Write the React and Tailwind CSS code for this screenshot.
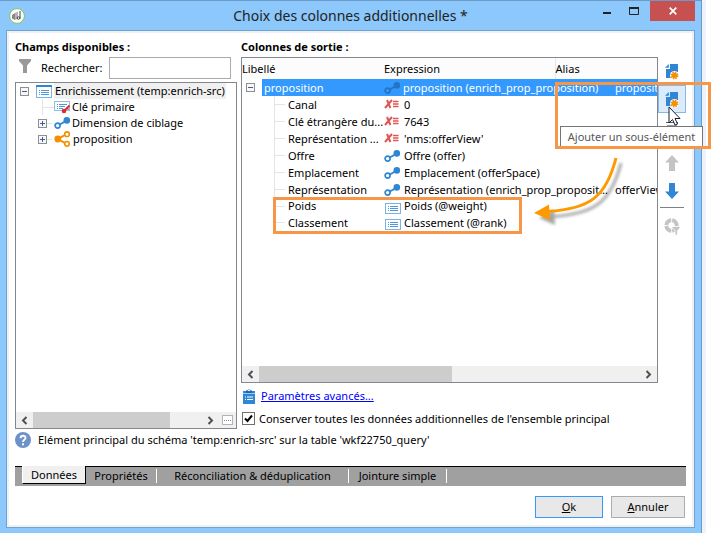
import React from "react";

function LinkIcon({ dim }) {
  const c = dim ? "#2474c4" : "#2e86d4";
  return (
    <svg width="17" height="14" viewBox="0 0 17 14" className="shrink-0" aria-hidden="true">
      <path d="M4 9.5 L12 5" stroke={c} strokeWidth="2" />
      <circle cx="3.6" cy="9.6" r="2.5" fill={dim ? "#3399ff" : "#fff"} stroke={c} strokeWidth="1.7" />
      <circle cx="12.8" cy="4.4" r="3.3" fill={c} />
    </svg>
  );
}

function ShareIcon() {
  return (
    <svg width="17" height="16" viewBox="0 0 17 16" className="shrink-0" aria-hidden="true">
      <path d="M12.5 3.2 L4 8 L12.5 12.8" fill="none" stroke="#f29100" strokeWidth="2" />
      <circle cx="3.8" cy="8" r="3.4" fill="#f29100" />
      <circle cx="13" cy="3.2" r="2.3" fill="#fff" stroke="#f29100" strokeWidth="1.6" />
      <circle cx="13" cy="12.8" r="2.3" fill="#fff" stroke="#f29100" strokeWidth="1.6" />
    </svg>
  );
}

function SchemaIcon() {
  return (
    <svg width="16" height="13" viewBox="0 0 16 13" className="shrink-0" aria-hidden="true">
      <rect x="0.5" y="0.5" width="15" height="12" fill="#fff" stroke="#7ab3e4" />
      <rect x="0" y="0" width="16" height="2" fill="#2e86d4" />
      <path d="M3 5.5h1M3 7.5h1M3 9.5h1M5 5.5h8M5 7.5h8M5 9.5h8" stroke="#4d98dc" strokeWidth="1" />
    </svg>
  );
}

function FieldIcon() {
  return (
    <svg width="16" height="11" viewBox="0 0 16 11" className="shrink-0" aria-hidden="true">
      <rect x="0.5" y="0.5" width="15" height="10" fill="#fff" stroke="#7ab3e4" />
      <path d="M3 3.5h1M3 5.5h1M3 7.5h1M5 3.5h8M5 5.5h8M5 7.5h8" stroke="#4d98dc" strokeWidth="1" />
    </svg>
  );
}

function KeyIcon() {
  return (
    <svg width="17" height="14" viewBox="0 0 17 14" className="shrink-0" aria-hidden="true">
      <rect x="0.5" y="1.5" width="15" height="9" fill="#fff" stroke="#8fbfe8" />
      <path d="M3 4.5h1M3 6.5h1M3 8.5h1M5 4.5h8M5 6.5h6M5 8.5h4" stroke="#4d98dc" strokeWidth="1" />
      <path d="M15.5 5.5 L10.5 10.5" stroke="#e02a2a" strokeWidth="1.8" />
      <circle cx="10" cy="11" r="2.3" fill="#e02a2a" />
      <path d="M13 8l1.6 1.6" stroke="#e02a2a" strokeWidth="1.3" />
    </svg>
  );
}

function ValueIcon() {
  return (
    <svg width="17" height="11" viewBox="0 0 17 11" className="shrink-0" aria-hidden="true">
      <path d="M3 1 L6.4 9 M8 1 L1 9" stroke="#e35454" strokeWidth="2" />
      <path d="M9 2.5h5.500M9 5h5.500M9 7.500h5.500" stroke="#e35454" strokeWidth="1.400" />
    </svg>
  );
}

function Expander({ open }) {
  return (
    <svg width="9" height="9" viewBox="0 0 9 9" className="shrink-0" aria-hidden="true">
      <rect x="0.5" y="0.5" width="8" height="8" fill="#f7f7f7" stroke="#8f8f8f" />
      <path d={open ? "M2 4.5h5" : "M2 4.5h5M4.5 2v5"} stroke="#3a5fa8" />
    </svg>
  );
}

function NewItemIcon() {
  return (
    <svg width="14" height="17" viewBox="0 0 14 17" aria-hidden="true">
      <path d="M5 1H13V9H9L6 12V15H1V6H5Z" fill="#2e86d4" />
      <path d="M3.800 1V4.800H0Z" fill="#2e86d4" />
      <circle cx="9.500" cy="12.500" r="4.500" fill="#fff" />
      <circle cx="9.500" cy="12.500" r="2.800" fill="#f29100" />
      <circle cx="9.500" cy="12.500" r="3.300" fill="none" stroke="#f29100" strokeWidth="1.400" strokeDasharray="1.500 1.092" />
    </svg>
  );
}

function Arrow({ up }) {
  return (
    <svg width="14" height="17" viewBox="0 0 14 17" aria-hidden="true">
      {up ? (
        <path d="M7 0L14 7.5H10V16H4V7.5H0Z" fill="#c4c4c4" />
      ) : (
        <path d="M7 16L14 8.5H10V0H4V8.5H0Z" fill="#2e86d4" />
      )}
    </svg>
  );
}

function Chevron({ right }) {
  return (
    <svg width="7" height="9" viewBox="0 0 7 9" aria-hidden="true">
      <path d={right ? "M1.5 1L5 4.5L1.5 8" : "M5.5 1L2 4.5L5.5 8"} fill="none" stroke="#505050" strokeWidth="2" />
    </svg>
  );
}

const icons = { value: ValueIcon, link: LinkIcon, field: FieldIcon };

const rows = [
  { label: "Canal", icon: "value", expr: "0" },
  { label: "Clé étrangère du...", icon: "value", expr: "7643" },
  { label: "Représentation ...", icon: "value", expr: "'nms:offerView'" },
  { label: "Offre", icon: "link", expr: "Offre (offer)" },
  { label: "Emplacement", icon: "link", expr: "Emplacement (offerSpace)" },
  { label: "Représentation", icon: "link", expr: "Représentation (enrich_prop_proposit...", alias: "offerView" },
  { label: "Poids", icon: "field", expr: "Poids (@weight)", short: true },
  { label: "Classement", icon: "field", expr: "Classement (@rank)" },
];

function TitleBar() {
  return (
    <header className="relative flex h-[29px] items-center justify-between pl-[9px]">
      <svg width="16" height="16" viewBox="0 0 16 16" aria-hidden="true">
        <circle cx="8" cy="8" r="7.4" fill="#fff" stroke="#8cc152" />
        <path d="M3 7l3-2v7l-3-1.500z" fill="#888" />
        <path d="M6 5l3-1.500v7l-3 1.500z" fill="#b5b5b5" />
        <path d="M11 3v7.500M8 9.500q1.500-1.500 3 0v1q-1.500 1.500-3 0z" fill="none" stroke="#444" />
      </svg>
      <h1 className="absolute inset-x-0 text-center text-[14px] leading-5 text-[#222]">
        Choix des colonnes additionnelles *
      </h1>
      <div className="relative mr-[6px] flex self-start">
        <button aria-label="Réduire" className="flex h-[20px] w-[22px] items-center justify-center">
          <svg width="8" height="8" viewBox="0 0 8 8"><path d="M0 6h8" stroke="#222" strokeWidth="2" /></svg>
        </button>
        <button aria-label="Agrandir" className="flex h-[20px] w-[32px] items-center justify-center">
          <svg width="10" height="8" viewBox="0 0 10 8"><path d="M.5 1v6.500h9V1" fill="none" stroke="#222" /><path d="M0 1h10" stroke="#222" strokeWidth="2" /></svg>
        </button>
        <button aria-label="Fermer" className="flex h-[20px] w-[45px] items-center justify-center bg-[#c75050]">
          <svg width="8" height="8" viewBox="0 0 8 8"><path d="M.7 .7l6.600 6.600M7.300 .7l-6.600 6.600" stroke="#fff" strokeWidth="1.700" /></svg>
        </button>
      </div>
    </header>
  );
}

function FieldsPanel() {
  return (
    <section className="flex w-[222px] shrink-0 flex-col">
      <h2 className="h-[20px] leading-5 font-bold">Champs disponibles :</h2>
      <div className="mb-[3px] flex h-[22px] items-center pr-[6px] pl-[4px]">
        <svg width="12" height="14" viewBox="0 0 12 14" className="mb-1 shrink-0" aria-hidden="true">
          <path d="M0 0H12V2L8 6.500V14H4V6.500L0 2Z" fill="#999" />
        </svg>
        <label htmlFor="search" className="ml-[10px] w-[68px]">Rechercher:</label>
        <input id="search" className="h-[22px] min-w-0 flex-1 border border-[#ababab] bg-white px-1 outline-none" />
      </div>
      <div className="flex flex-1 flex-col border border-[#828790]">
        <ul className="flex-1 pl-[4px] leading-4 whitespace-nowrap">
          <li>
            <div className="flex h-4 items-center">
              <Expander open />
              <span className="ml-[7px]"><SchemaIcon /></span>
              <span className="ml-[2px] bg-[#f0f0f0] px-px">Enrichissement (temp:enrich-src)</span>
            </div>
            <ul>
              <li className="flex h-4 items-center">
                <span className="ml-[22px] h-4 w-[12px] border-l border-[#e4e4e4]">
                  <span className="mt-2 block border-t border-[#e4e4e4]" />
                </span>
                <KeyIcon />
                <span className="ml-[1px]">Clé primaire</span>
              </li>
              <li className="flex h-4 items-center pl-[18px]">
                <Expander />
                <span className="mr-[2px] w-[5px] border-t border-[#e4e4e4]" />
                <LinkIcon />
                <span className="ml-[1px]">Dimension de ciblage</span>
              </li>
              <li className="flex h-4 items-center pl-[18px]">
                <Expander />
                <span className="mr-[2px] w-[5px] border-t border-[#e4e4e4]" />
                <ShareIcon />
                <span className="ml-[2px]">proposition</span>
              </li>
            </ul>
          </li>
        </ul>
        <div className="flex h-[16px] items-stretch bg-[#f0f0f0]">
          <span className="flex w-[17px] items-center justify-center"><Chevron /></span>
          <span className="w-[137px] bg-[#cdcdcd]" />
          <span className="flex flex-1 items-center justify-end"><Chevron right /></span>
          <button aria-label="Plus" className="mr-[3px] ml-[8px] flex h-[10px] w-[11px] items-center justify-center self-center border border-[#b4b4b4] bg-white">
            <svg width="7" height="1" viewBox="0 0 7 1"><path d="M0 .5h7" stroke="#888" strokeDasharray="1 1" /></svg>
          </button>
        </div>
      </div>
    </section>
  );
}

function ColumnsPanel() {
  return (
    <section className="flex min-w-0 flex-1 flex-col">
      <h2 className="h-[20px] leading-5 font-bold">Colonnes de sortie :</h2>
      <div className="flex min-h-[326px] flex-1 flex-col overflow-hidden border border-[#828790]">
        <table className="w-full table-fixed border-collapse text-left whitespace-nowrap">
          <colgroup>
            <col className="w-[142px]" />
            <col className="w-[171px]" />
            <col className="w-[58px]" />
            <col />
          </colgroup>
          <thead>
            <tr className="h-[21px] bg-[#fcfcfc]">
              <th className="p-0 font-normal">Libellé</th>
              <th className="p-0 font-normal">Expression</th>
              <th colSpan="2" className="border-l border-[#e3e8f0] p-0 font-normal">Alias</th>
            </tr>
          </thead>
          <tbody className="leading-[17px]">
            <tr className="h-[17px] text-white">
              <td className="p-0">
                <div className="flex h-[17px] items-center">
                  <span className="w-[20px] shrink-0 pl-[4px]"><Expander open /></span>
                  <span className="flex-1 bg-[#3399ff] pl-[2px]">proposition</span>
                </div>
              </td>
              <td colSpan="2" className="bg-[#3399ff] p-0">
                <div className="flex h-[17px] items-center gap-[2px]"><LinkIcon dim />proposition (enrich_prop_proposition)</div>
              </td>
              <td className="overflow-hidden bg-[#3399ff] p-0 pl-[2px]">proposition</td>
            </tr>
            {rows.map((r) => {
              const Icon = icons[r.icon];
              const h = r.short ? "h-[16px] leading-4" : "h-[17px]";
              return (
                <tr key={r.label} className={h}>
                  <td className="p-0">
                    <div className={"ml-[32px] flex items-center border-l border-[#e4e4e4] " + h}>
                      <span className="mr-[3px] w-[10px] shrink-0 border-t border-[#e4e4e4]" />
                      {r.label}
                    </div>
                  </td>
                  <td colSpan="2" className="p-0">
                    <div className={"flex items-center " + h}>
                      <span className={r.icon === "field" ? "w-[20px] shrink-0 pt-1 pl-[1px]" : "w-[20px] shrink-0"}><Icon /></span>
                      {r.expr}
                    </div>
                  </td>
                  <td className="overflow-hidden p-0 pl-[2px]">{r.alias}</td>
                </tr>
              );
            })}
          </tbody>
        </table>
        <div className="flex-1" />
        <div className="flex h-[16px] bg-[#f0f0f0]">
          <span className="flex w-[17px] items-center justify-center"><Chevron /></span>
          <span className="w-[193px] bg-[#cdcdcd]" />
          <span className="flex flex-1 items-center justify-end pr-[5px]"><Chevron right /></span>
        </div>
      </div>
      <div className="flex h-[25px] items-center pl-[2px]">
        <svg width="12" height="16" viewBox="0 0 12 16" aria-hidden="true">
          <path d="M0 3H12V16H0Z" fill="#2e86d4" />
          <path d="M0 5.500h12" stroke="#9cc9f0" />
          <path d="M3 2.500h1.500a1.500 1.500 0 0 1 3 0H9V5H3Z" fill="#1d66ab" />
          <path d="M2 9h1M2 11.500h1M4 9h6M4 11.500h6" stroke="#fff" />
          <circle cx="6" cy="2.200" r="1" fill="#fff" />
        </svg>
        <a href="#avances" className="ml-[6px] text-[#0000ff] underline">Paramètres avancés...</a>
      </div>
      <label className="flex h-[21px] items-center gap-[4px] pl-px whitespace-nowrap">
        <span className="grid">
          <input type="checkbox" defaultChecked className="peer col-start-1 row-start-1 size-[13px] appearance-none border border-[#707070] bg-white" />
          <svg width="13" height="13" viewBox="0 0 13 13" className="pointer-events-none col-start-1 row-start-1 hidden peer-checked:block" aria-hidden="true">
            <path d="M3 6.500L5.500 9L10 3.500" fill="none" stroke="#000" strokeWidth="2" />
          </svg>
        </span>
        Conserver toutes les données additionnelles de l'ensemble principal
      </label>
    </section>
  );
}

function Toolbar() {
  return (
    <div className="flex w-[28px] shrink-0 flex-col items-center pt-[20px]">
      <button aria-label="Ajouter" className="flex h-[28px] w-[28px] items-center justify-center"><NewItemIcon /></button>
      <button aria-label="Ajouter un sous-élément" className="flex h-[28px] w-[28px] items-center justify-center border border-[#84b9ec] bg-[#dcebfb]"><NewItemIcon /></button>
      <button aria-label="Supprimer" className="flex h-[36px] w-[28px] justify-center pt-[8px]">
        <svg width="12" height="16" viewBox="0 0 12 16"><path d="M0 1.500h12" stroke="#555" /><path d="M1 4h10v11H1z" fill="#999" /></svg>
      </button>
      <button aria-label="Monter" className="flex h-[28px] w-[28px] items-center justify-center"><Arrow up /></button>
      <button aria-label="Descendre" className="flex h-[28px] w-[28px] items-center justify-center"><Arrow /></button>
      <div className="my-[2px] w-[24px] border-t border-[#808080]" />
      <button aria-label="Analyser" className="mt-[4px] flex h-[24px] w-[28px] items-center justify-center">
        <svg width="16" height="17" viewBox="0 0 16 17">
          <circle cx="7.500" cy="7.500" r="5.200" fill="none" stroke="#c4c4c4" strokeWidth="4" strokeDasharray="7.200 1" />
          <path d="M8 8.500H16V10L13.500 12.500V17H11V12.500L8 9.500Z" fill="#c4c4c4" stroke="#fff" strokeWidth=".8" />
        </svg>
      </button>
    </div>
  );
}

function Tabs() {
  return (
    <div role="tablist" className="mt-[15px] flex h-[20px] items-start border-t border-black bg-[#a0a0a0] pl-[7px]">
      <button role="tab" aria-selected="true" className="-mt-px h-[18px] w-[64px] border-r border-b border-l border-black border-l-white bg-[#f0f0f0] leading-4">Données</button>
      <button role="tab" className="mt-[2px] h-[14px] w-[71px] border-r border-white leading-[14px]">Propriétés</button>
      <button role="tab" className="mt-[2px] h-[14px] w-[192px] border-r border-white leading-[14px]">Réconciliation &amp; déduplication</button>
      <button role="tab" className="mt-[2px] h-[14px] w-[98px] border-r border-white leading-[14px]">Jointure simple</button>
    </div>
  );
}

function Annotations() {
  return (
    <>
      <div className="absolute top-[197px] left-[273px] h-[37px] w-[249px] border-[3px] border-[#f79646]" />
      <svg className="absolute top-[150px] left-[528px]" width="100" height="80" viewBox="0 0 100 80" aria-hidden="true">
        <defs>
          <filter id="soft" x="-20%" y="-20%" width="150%" height="150%"><feGaussianBlur stdDeviation="1.500" /></filter>
        </defs>
        <g transform="translate(5 5)" opacity=".35" filter="url(#soft)">
          <path d="M88 8C78 47 62 59 20 61.500" fill="none" stroke="#000" strokeWidth="3" />
          <path d="M6 63L21 54.500L22 70Z" fill="#000" />
        </g>
        <path d="M88 8C78 47 62 59 20 61.500" fill="none" stroke="#ff9900" strokeWidth="3" />
        <path d="M6 63L21 54.500L22 70Z" fill="#ff9900" />
      </svg>
      <div role="tooltip" className="absolute top-[126px] right-[10px] flex h-[21px] w-[143px] items-center justify-center border border-[#767676] bg-white whitespace-nowrap text-[#575757]">
        Ajouter un sous-élément
      </div>
      <div className="absolute top-[82px] right-[2px] h-[67px] w-[156px] border-[3px] border-[#f79646]" />
      <svg className="absolute top-[106px] right-[32px]" width="13" height="20" viewBox="0 0 13 20" aria-hidden="true">
        <path d="M1 1V17L4.500 13.500L7 19L9.500 18L7 12.500H12Z" fill="#fff" stroke="#1c1c30" />
      </svg>
    </>
  );
}

export default function App() {
  return (
    <div className="relative flex min-h-screen w-full bg-white font-['Noto_Sans','Open_Sans',sans-serif] text-[11px] leading-4 text-black">
      <main className="flex min-w-0 flex-1 flex-col border-t border-r border-[#6b9ac9] bg-[#8cc8fb]">
        <TitleBar />
        <div className="mx-[6px] mb-[5px] flex flex-1 flex-col border border-[#6ea5d6] bg-[#f0f0f0] p-[2px]">
          <div className="flex flex-1 flex-col bg-white px-[6px] pt-[4px] pb-[7px]">
            <div className="flex flex-1">
              <FieldsPanel />
              <div className="w-[4px] shrink-0" />
              <ColumnsPanel />
              <Toolbar />
            </div>
            <p className="flex h-[22px] items-center gap-[7px]">
              <svg width="16" height="16" viewBox="0 0 16 16" aria-hidden="true">
                <circle cx="8" cy="8" r="8" fill="#6d92c8" />
                <path d="M5.600 6.200C5.600 2.800 10.600 3 10.500 6C10.400 7.800 8 7.800 8 10" fill="none" stroke="#fff" strokeWidth="1.900" />
                <rect x="7" y="11.300" width="2" height="2" fill="#fff" />
              </svg>
              Elément principal du schéma 'temp:enrich-src' sur la table 'wkf22750_query'
            </p>
            <Tabs />
            <div className="mt-[10px] flex justify-end gap-[8px]">
              <button className="h-[22px] w-[68px] border border-[#3399ff] bg-[#e8e8e8]"><u>O</u>k</button>
              <button className="mr-px h-[22px] w-[74px] border border-[#acacac] bg-[#e8e8e8]"><u>A</u>nnuler</button>
            </div>
          </div>
        </div>
      </main>
      <div className="w-[4px] bg-[#eef3fb]" />
      <div className="w-[7px]" />
      <Annotations />
    </div>
  );
}
